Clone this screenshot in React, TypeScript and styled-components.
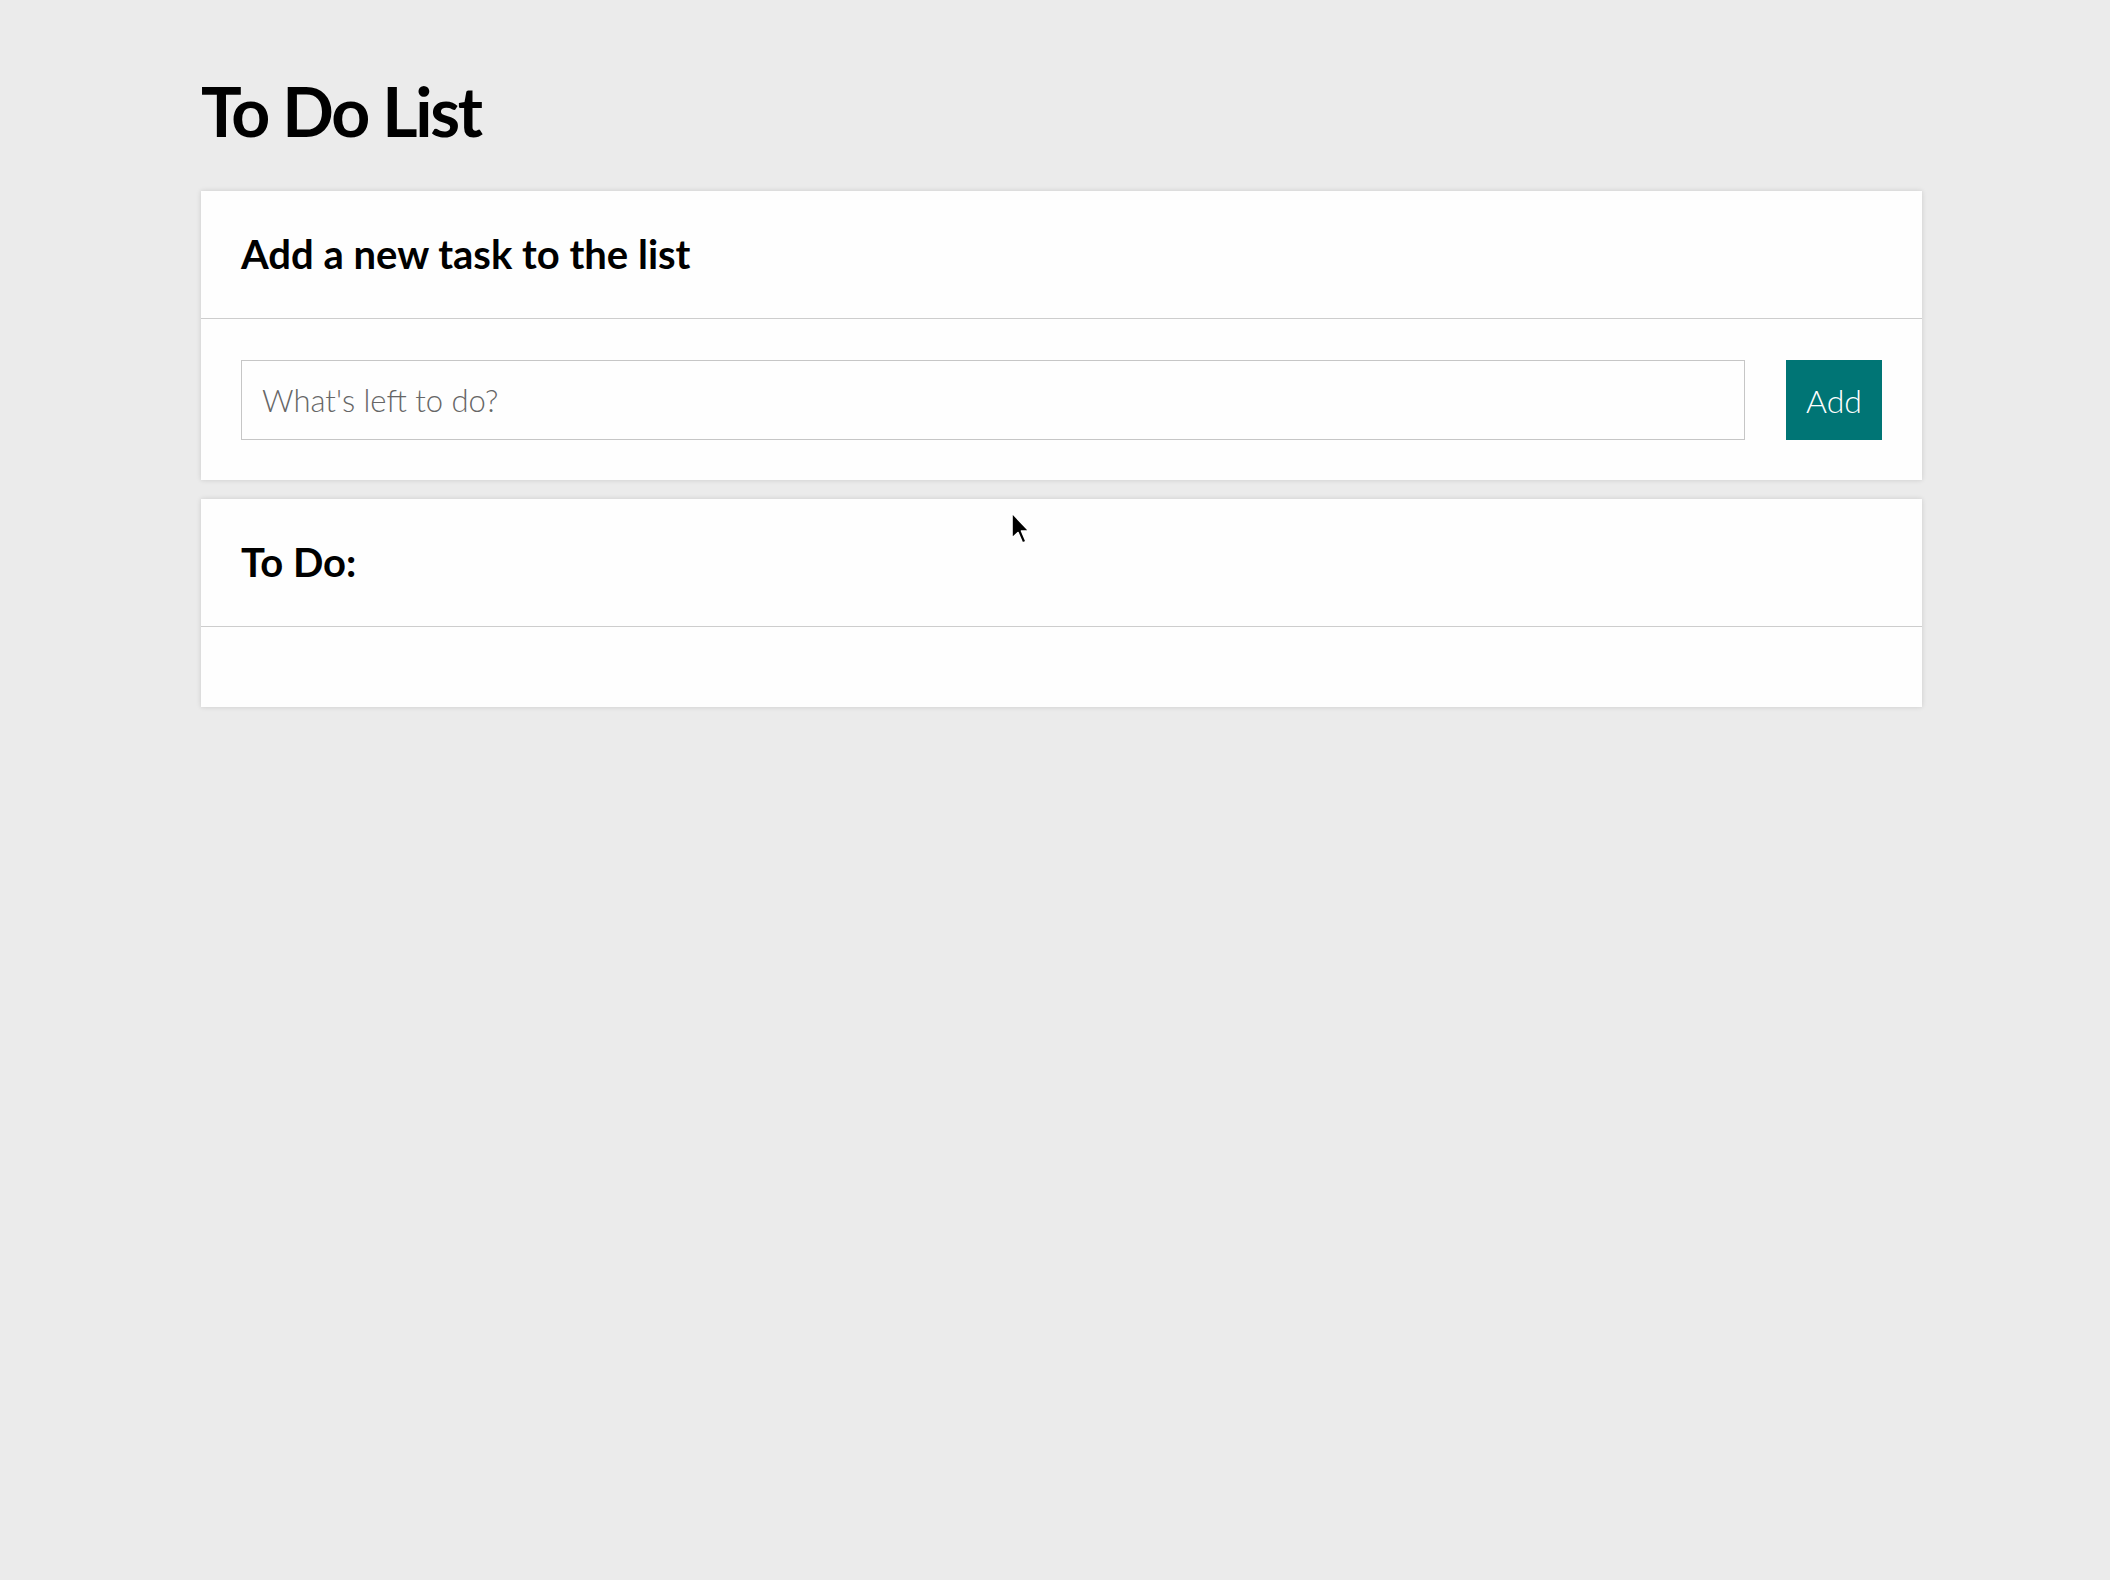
import { useState } from 'react';
import styled, { createGlobalStyle } from 'styled-components';

const GlobalStyle = createGlobalStyle`
  html, body {
    margin: 0;
    padding: 0;
    background: #ebebeb;
    font-family: Lato, "Open Sans", sans-serif;
    color: #000;
  }
  * {
    box-sizing: border-box;
  }
`;

const Page = styled.div`
  position: relative;
  min-height: 1580px;
  padding: 70px 188px 0 201px;
`;

const Title = styled.h1`
  margin: 0 0 40px;
  font-size: 68px;
  font-weight: 700;
  line-height: normal;
  letter-spacing: -2.3px;
`;

const Card = styled.section`
  background: #fefefe;
  box-shadow: 0 0 5px rgba(0, 0, 0, 0.14);
  margin-bottom: 19px;
`;

const CardHeader = styled.h2`
  margin: 0;
  padding: 40px;
  font-size: 40px;
  line-height: 47px;
  font-weight: 700;
  border-bottom: 1px solid #cdcdcd;
`;

const CardBody = styled.div<{ $top?: number }>`
  padding: ${(p) => p.$top ?? 40}px 40px 40px;
`;

const Form = styled.form`
  display: flex;
  gap: 41px;
`;

const Input = styled.input`
  flex: 1;
  height: 80px;
  padding: 0 20px;
  border: 1px solid #c6c6c6;
  border-radius: 0;
  background: #fefefe;
  font-family: Lato, sans-serif;
  font-weight: 300;
  font-size: 31px;
  color: #222;
  outline: none;

  &::placeholder {
    color: #666;
  }
`;

const AddButton = styled.button`
  width: 96px;
  height: 80px;
  border: none;
  border-radius: 0;
  background: #007575;
  color: #fff;
  font-family: Lato, sans-serif;
  font-weight: 300;
  font-size: 32px;
  cursor: pointer;
`;

const TaskList = styled.ul`
  margin: 0;
  padding: 0;
  list-style: none;
`;

const Task = styled.li`
  font-size: 32px;
  font-weight: 300;
  padding: 10px 0;
`;

const Pointer = styled.svg`
  position: absolute;
  left: 1010px;
  top: 512px;
  pointer-events: none;
`;

export default function App() {
  const [text, setText] = useState('');
  const [tasks, setTasks] = useState<string[]>([]);

  const add = (e: React.FormEvent) => {
    e.preventDefault();
    if (!text.trim()) return;
    setTasks([...tasks, text.trim()]);
    setText('');
  };

  return (
    <>
      <GlobalStyle />
      <Page>
        <Title>To Do List</Title>
        <Card>
          <CardHeader>Add a new task to the list</CardHeader>
          <CardBody $top={41}>
            <Form onSubmit={add}>
              <Input
                placeholder="What's left to do?"
                value={text}
                onChange={(e) => setText(e.target.value)}
              />
              <AddButton type="submit">Add</AddButton>
            </Form>
          </CardBody>
        </Card>
        <Card>
          <CardHeader>To Do:</CardHeader>
          <CardBody>
            <TaskList>
              {tasks.map((t, i) => (
                <Task key={i}>{t}</Task>
              ))}
            </TaskList>
          </CardBody>
        </Card>
        <Pointer width="20" height="34" viewBox="0 0 20 34">
          <path
            d="M2 1 L2 26 L8 20.5 L12.5 31 L16 29.5 L11.5 19 L19 19 Z"
            fill="#000"
            stroke="#fff"
            strokeWidth="1.6"
            strokeLinejoin="round"
          />
        </Pointer>
      </Page>
    </>
  );
}
